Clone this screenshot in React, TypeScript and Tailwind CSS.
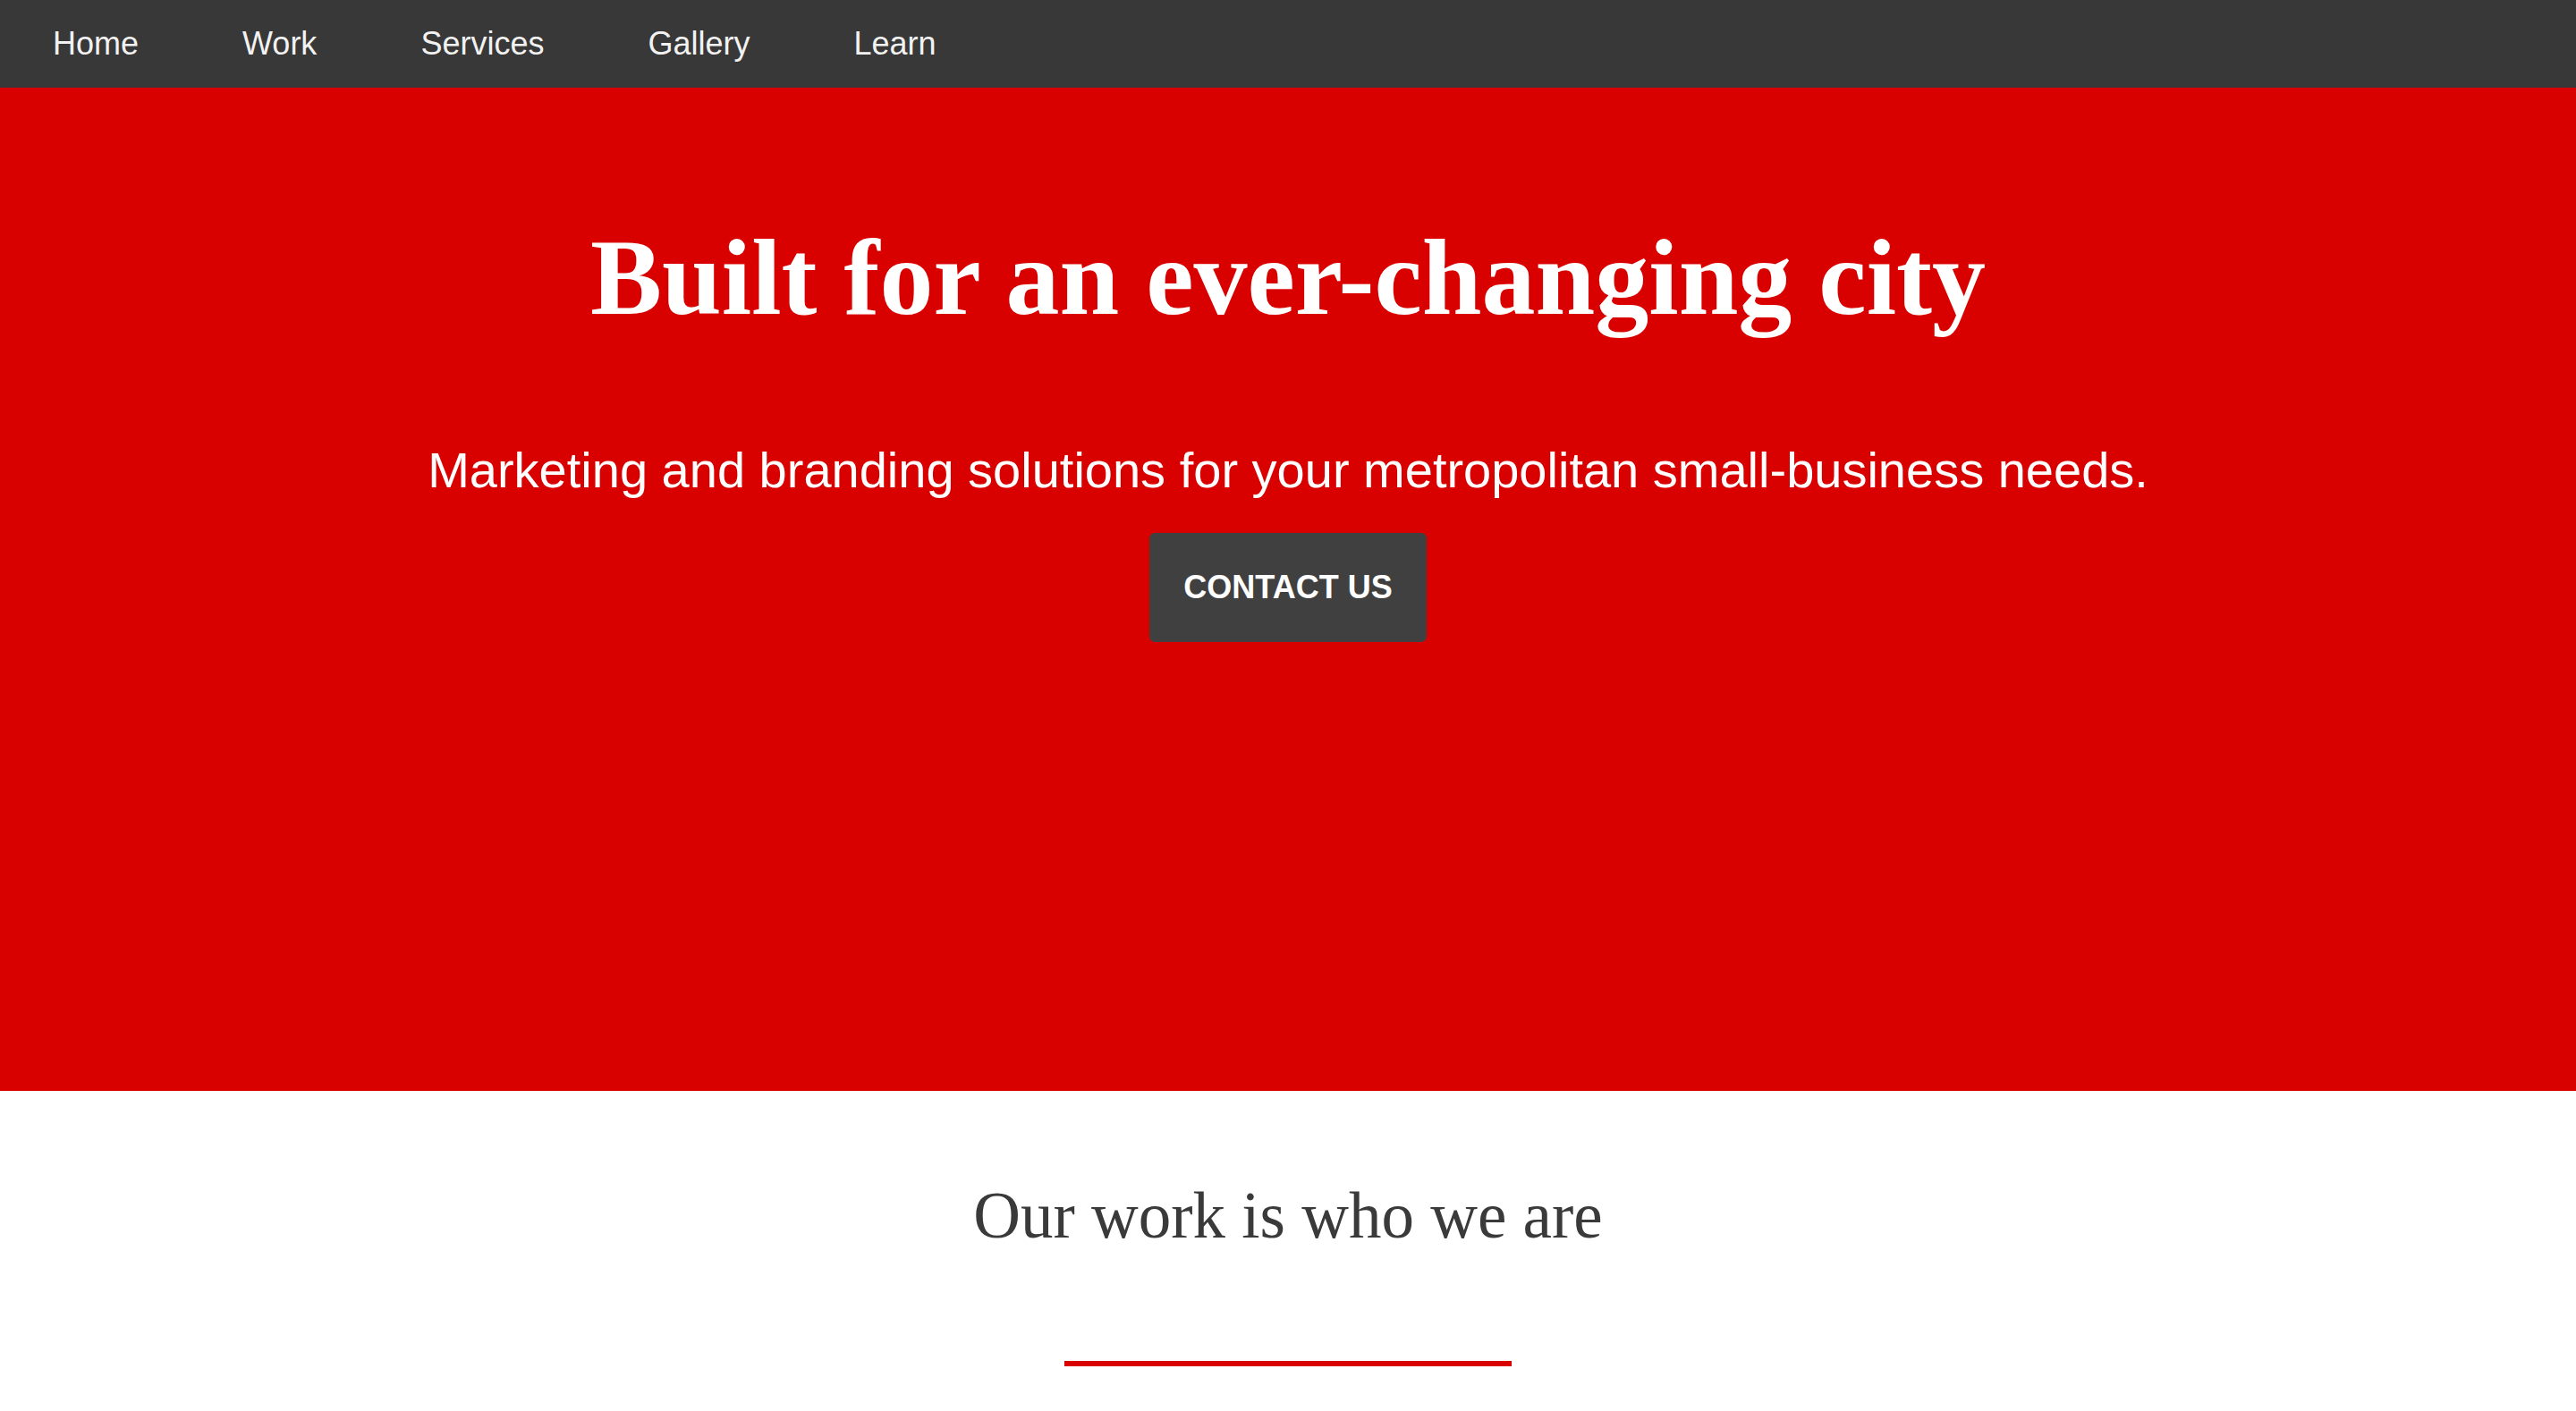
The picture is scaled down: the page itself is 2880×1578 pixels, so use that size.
import React from 'react';

const links = ['Home', 'Work', 'Services', 'Gallery', 'Learn'];

const App = () => {
  return (
    <div className="w-full min-h-screen bg-white">
      <nav className="h-[98px] bg-[#383838] flex items-center pl-[59px] gap-[116px]">
        {links.map((link) => (
          <a
            key={link}
            href="#"
            className="text-[36px] leading-none text-[#f2f2f2] font-['Liberation_Sans',Arial,sans-serif]"
          >
            {link}
          </a>
        ))}
      </nav>

      <section className="h-[1122px] bg-[#d90000] flex flex-col items-center pt-[153px]">
        <h1 className="text-[120px] leading-none font-bold text-white font-['Liberation_Serif','Times_New_Roman',serif]">
          Built for an ever-changing city
        </h1>
        <p className="mt-[121px] text-[56px] leading-[1.2] text-white font-['Liberation_Sans',Arial,sans-serif]">
          Marketing and branding solutions for your metropolitan small-business needs.
        </p>
        <button className="mt-[37px] w-[310px] h-[122px] rounded-[6px] bg-[#404040] text-white text-[36px] font-bold flex items-center justify-center font-['Liberation_Sans',Arial,sans-serif]">
          CONTACT US
        </button>
      </section>

      <section className="flex flex-col items-center pt-[96px] pb-[60px]">
        <h2 className="text-[73px] leading-[1.2] text-[#3a3a3a] font-['Liberation_Serif','Times_New_Roman',serif]">
          Our work is who we are
        </h2>
        <div className="mt-[118px] w-[500px] h-[6px] bg-[#d90000]" />
      </section>
    </div>
  );
};

export default App;
